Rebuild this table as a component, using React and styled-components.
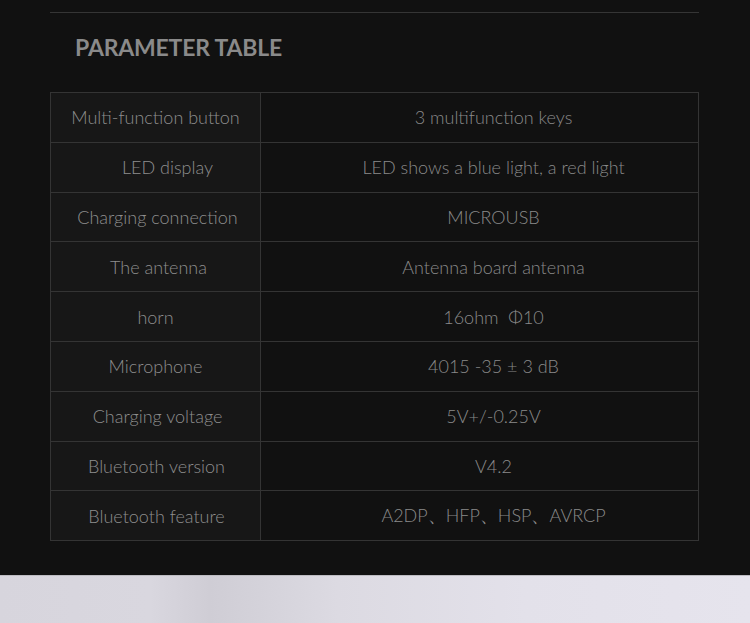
import React from 'react';
import styled, { createGlobalStyle } from 'styled-components';

const GlobalStyle = createGlobalStyle`
  html, body {
    margin: 0;
    padding: 0;
    background: #111111;
  }
  body {
    font-family: Lato, "Noto Sans", sans-serif;
  }
`;

const Page = styled.div`
  width: 750px;
  height: 623px;
  overflow: hidden;
  display: flex;
  flex-direction: column;
  background: #111111;
`;

const Section = styled.section`
  padding: 12px 51px 0 50px;
  height: 575px;
  flex-shrink: 0;
  box-sizing: border-box;
`;

const TopRule = styled.div`
  height: 1px;
  background: #353535;
`;

const Title = styled.h2`
  margin: 0;
  padding: 20px 0 0 25px;
  height: 79px;
  box-sizing: border-box;
  font-family: Lato, "Noto Sans", sans-serif;
  font-size: 23px;
  font-weight: 700;
  color: #8a8a8a;
  letter-spacing: -0.2px;
`;

const Table = styled.table`
  width: 649px;
  border-collapse: collapse;
  table-layout: fixed;
`;

const Row = styled.tr`
  height: 49.8px;
`;

const Cell = styled.td`
  border: 1px solid #343434;
  padding: ${p => (p.$key ? '0' : '0 0 0 28px')};
  text-align: center;
  vertical-align: middle;
  font-size: 18px;
  font-weight: 300;
  white-space: pre;
  color: ${p => (p.$key ? '#8e8e8e' : '#8a8a8a')};
  background: ${p => (p.$key ? '#171717' : '#111111')};
  width: ${p => (p.$key ? '209px' : 'auto')};
`;

const Shift = styled.span`
  display: inline-block;
  transform: translateX(${p => p.$by || 0}px);
`;

const Footer = styled.div`
  flex: 1;
  border-top: 1px solid #bdbcc2;
  background: linear-gradient(90deg, #d7d5dd 0%, #d9d7df 20%, #cfcdd5 28%, #dcdae2 45%, #e3e1ea 70%, #e6e4ed 100%);
`;

const params = [
  ['Multi-function button', '3 multifunction keys'],
  ['LED display', 'LED shows a blue light, a red light', 12],
  ['Charging connection', 'MICROUSB', 2],
  ['The antenna', 'Antenna board antenna', 3],
  ['horn', '16ohm  Φ10'],
  ['Microphone', '4015 -35 ± 3 dB'],
  ['Charging voltage', '5V+/-0.25V', 2],
  ['Bluetooth version', 'V4.2', 1],
  ['Bluetooth feature', 'A2DP、HFP、HSP、AVRCP', 1],
];

export default function App() {
  return (
    <Page>
      <GlobalStyle />
      <Section>
        <TopRule />
        <Title>PARAMETER TABLE</Title>
        <Table>
          <tbody>
            {params.map(([k, v, s]) => (
              <Row key={k}>
                <Cell $key>
                  <Shift $by={s}>{k}</Shift>
                </Cell>
                <Cell>{v}</Cell>
              </Row>
            ))}
          </tbody>
        </Table>
      </Section>
      <Footer />
    </Page>
  );
}
